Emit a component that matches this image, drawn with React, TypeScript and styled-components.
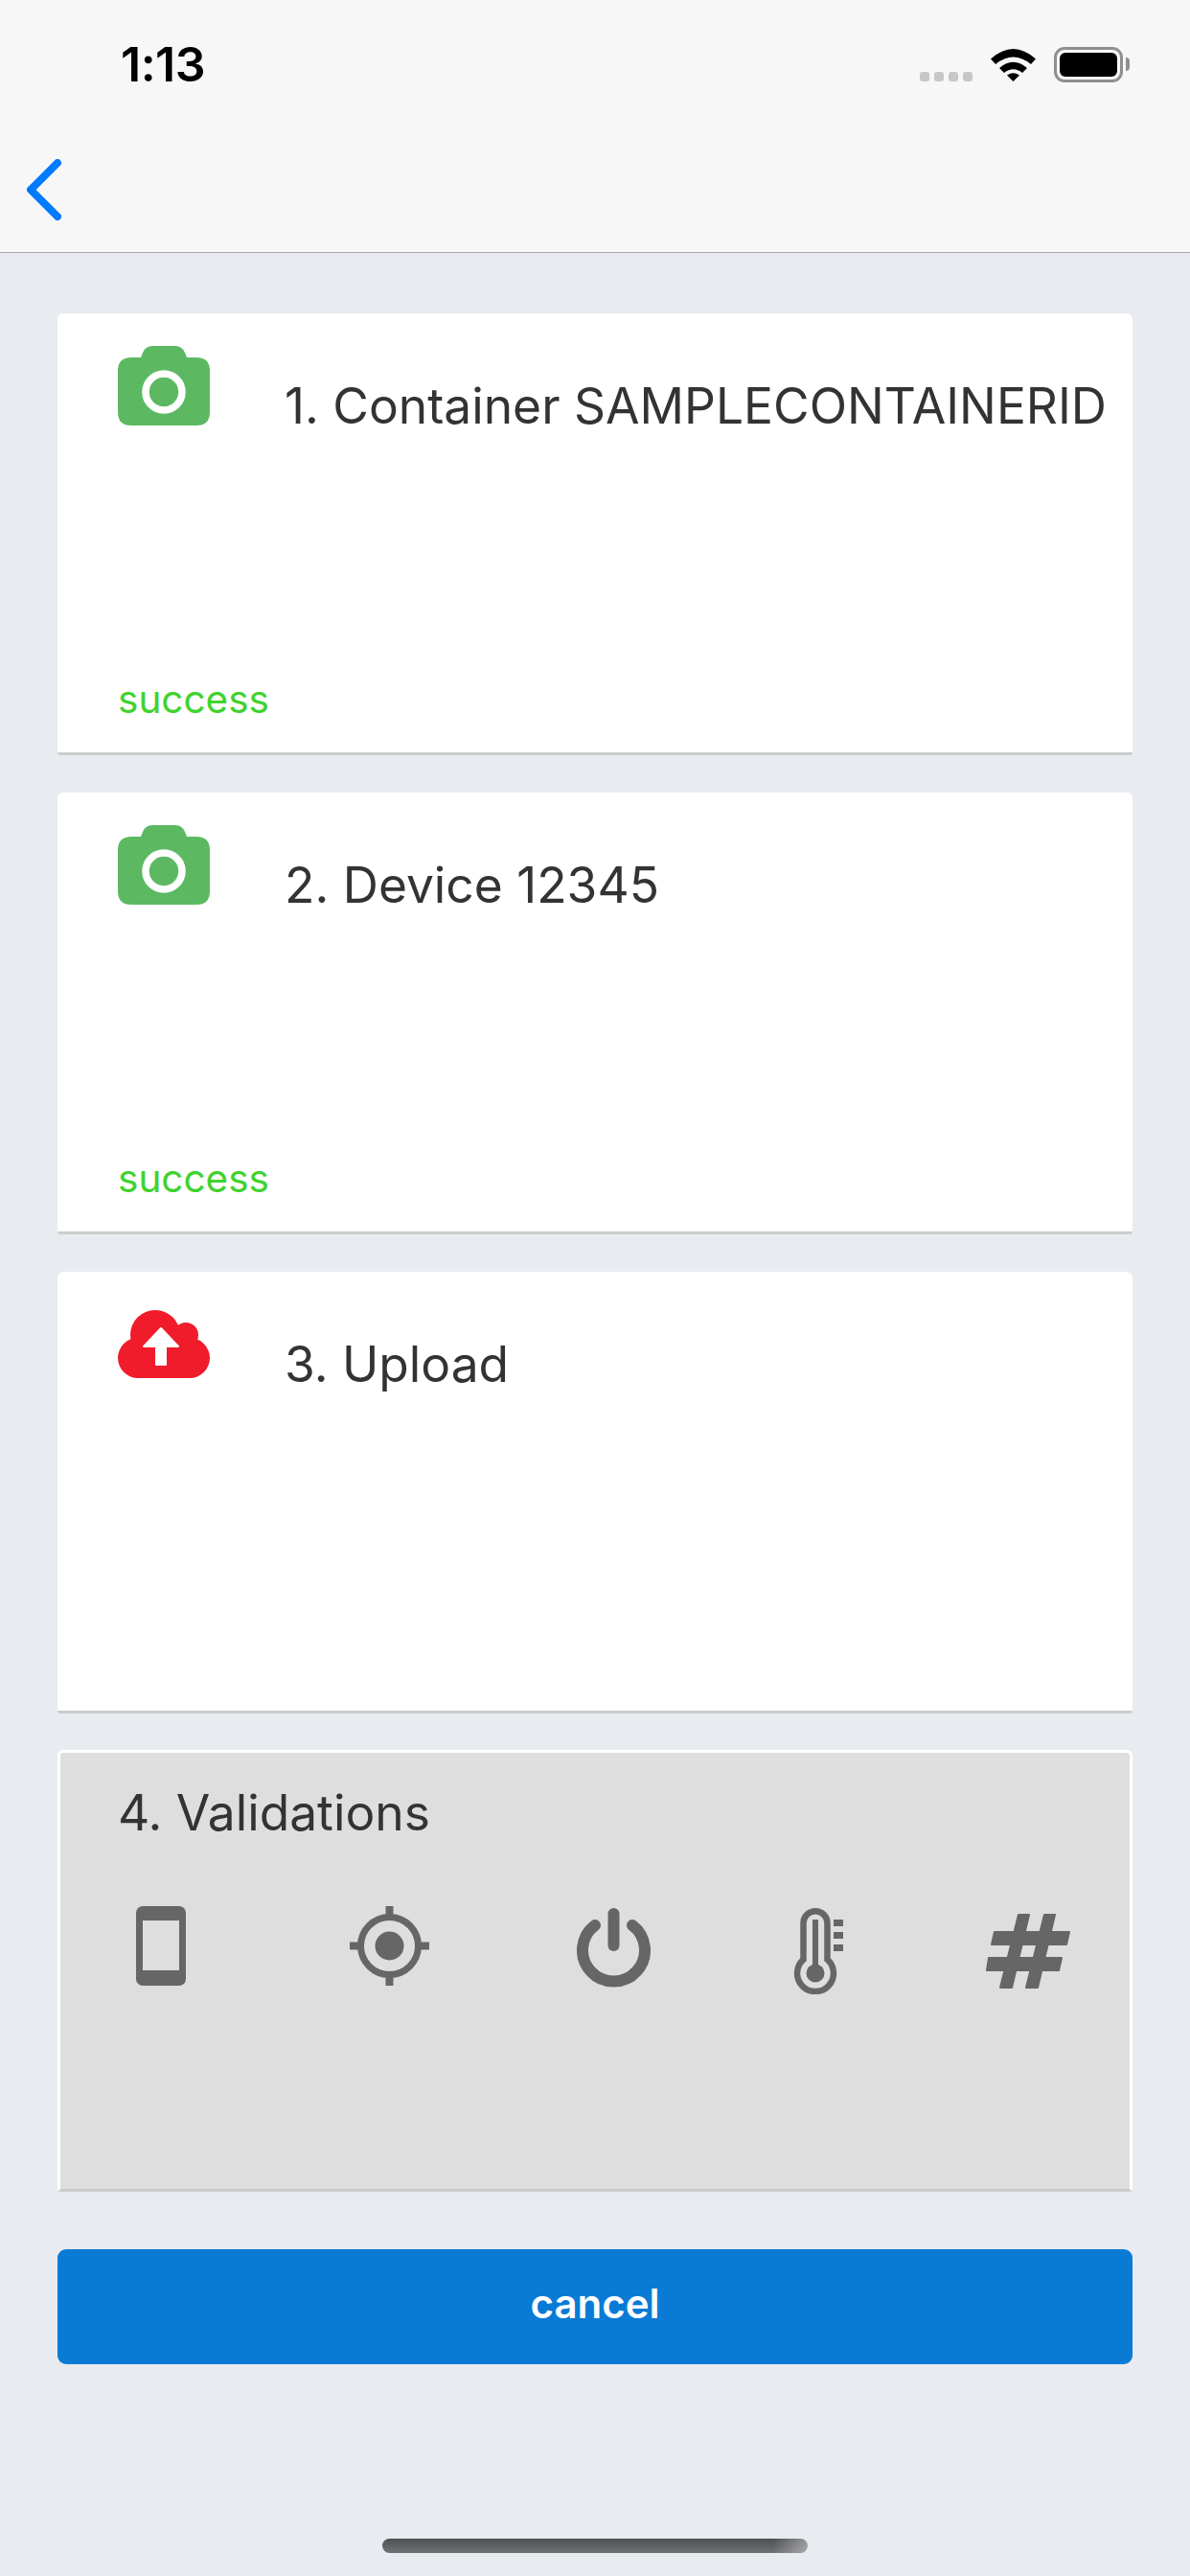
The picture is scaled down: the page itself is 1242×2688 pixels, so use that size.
import * as React from "react";
import styled, { createGlobalStyle } from "styled-components";

const GlobalStyle = createGlobalStyle`
  html, body {
    margin: 0;
    padding: 0;
    background: #e8ebf0;
    font-family: Inter, "Liberation Sans", sans-serif;
  }
  * { box-sizing: border-box; }
`;

const ICON_GREY = "#666666";
const PANEL_GREY = "#dedede";

const CameraIcon = () => (
  <svg width="96" height="83" viewBox="0 0 96 83">
    <path
      fill="#5cb962"
      d="M14 12H24L26 7Q29 0 36 0H60Q67 0 70 7L72 12H82Q96 12 96 26V69Q96 83 82 83H14Q0 83 0 69V26Q0 12 14 12Z"
    />
    <circle cx="48" cy="48" r="19" fill="none" stroke="#fff" strokeWidth="7.5" />
  </svg>
);

const CloudIcon = () => (
  <svg width="96" height="71" viewBox="0 0 96 71">
    <g fill="#f01c2c">
      <circle cx="39" cy="26" r="26" />
      <circle cx="71" cy="26" r="13" />
      <circle cx="21" cy="50" r="21" />
      <circle cx="75" cy="50" r="21" />
      <rect x="21" y="26" width="54" height="45" />
    </g>
    <path
      fill="#fff"
      stroke="#fff"
      strokeWidth="2"
      strokeLinejoin="round"
      d="M45 19L27 38H40V57H50V38H63Z"
    />
  </svg>
);

const PhoneIcon = () => (
  <svg width="52" height="83" viewBox="0 0 52 83">
    <rect width="52" height="83" rx="7" fill={ICON_GREY} />
    <rect x="7" y="15" width="38" height="52" fill={PANEL_GREY} />
  </svg>
);

const TargetIcon = () => (
  <svg width="83" height="83" viewBox="0 0 83 83">
    <g fill={ICON_GREY}>
      <circle cx="41.5" cy="41.5" r="15" />
      <rect x="37.5" y="0" width="8" height="12" />
      <rect x="37.5" y="71" width="8" height="12" />
      <rect x="0" y="37.5" width="12" height="8" />
      <rect x="71" y="37.5" width="12" height="8" />
    </g>
    <circle cx="41.5" cy="41.5" r="30" fill="none" stroke={ICON_GREY} strokeWidth="7" />
  </svg>
);

const PowerIcon = () => (
  <svg width="77" height="83" viewBox="0 0 77 83">
    <g fill="none" stroke={ICON_GREY} strokeWidth="12" strokeLinecap="round">
      <path d="M19 18A32.5 32.5 0 1 0 58 18" />
      <path d="M38.5 6V39" />
    </g>
  </svg>
);

const ThermometerIcon = () => (
  <svg width="53" height="90" viewBox="0 0 53 90">
    <path
      fill="none"
      stroke={ICON_GREY}
      strokeWidth="6.5"
      d="M10.5 53.7V15.75A12.5 12.5 0 0 1 35.5 15.75V53.7A19 19 0 1 1 10.5 53.7Z"
    />
    <g fill={ICON_GREY}>
      <rect x="20" y="12" width="6" height="50" />
      <circle cx="23" cy="68" r="9.5" />
      <rect x="42" y="12" width="10" height="7" />
      <rect x="42" y="25" width="10" height="7" />
      <rect x="42" y="38" width="10" height="7" />
    </g>
  </svg>
);

const HashIcon = () => (
  <svg width="88" height="78" viewBox="0 0 88 78">
    <g fill={ICON_GREY} stroke={ICON_GREY} strokeWidth="2" strokeLinejoin="round">
      <path d="M34 1H45L27 77H15Z" />
      <path d="M61 1H72L54 77H42Z" />
      <path d="M9 19H87L84 32H6Z" />
      <path d="M3 46H79L76 59H1Z" />
    </g>
  </svg>
);

const WifiIcon = () => (
  <svg width="47" height="36" viewBox="0 0 47 36">
    <g fill="#000">
      <path d="M0 12.5Q23.5 -8.5 47 12.5L42 18Q23.5 3 5 18Z" />
      <path d="M9 22Q23.5 9.5 38 22L33 27Q23.5 19.5 14 27Z" />
      <path d="M23.5 36L17 29.5Q23.5 25 30 29.5Z" />
    </g>
  </svg>
);

const Page = styled.div`
  width: 1242px;
  min-height: 2688px;
  display: flex;
  flex-direction: column;
  background: #e8ebf0;
  color: #333333;
`;

const Header = styled.header`
  height: 264px;
  background: #f7f7f7;
  border-bottom: 1px solid #a9a9ab;
`;

const StatusBar = styled.div`
  height: 132px;
  padding: 44px 70px 0 126px;
  display: flex;
  align-items: flex-start;
  justify-content: space-between;
`;

const Clock = styled.span`
  font-size: 50px;
  line-height: 47px;
  font-weight: 600;
  letter-spacing: -0.5px;
  color: #000;
`;

const StatusIcons = styled.div`
  display: flex;
  align-items: flex-start;
  margin-top: 5px;
`;

const SignalDots = styled.div`
  display: flex;
  gap: 5px;
  margin: 26px 19px 0 0;
`;

const SignalDot = styled.i`
  width: 10px;
  height: 10px;
  border-radius: 3px;
  background: #c7c7c7;
`;

const Battery = styled.div`
  position: relative;
  width: 72px;
  height: 37px;
  margin-left: 19px;
  padding: 3px;
  border: 3px solid #8f8f8f;
  border-radius: 11px;

  &::before {
    content: "";
    display: block;
    height: 100%;
    background: #000;
    border-radius: 6px;
  }

  &::after {
    content: "";
    position: absolute;
    top: 8px;
    right: -10px;
    width: 4px;
    height: 14px;
    background: #8f8f8f;
    border-radius: 0 6px 6px 0;
  }
`;

const NavBar = styled.nav`
  padding: 34px 0 0 28px;
`;

const Content = styled.main`
  display: flex;
  flex-direction: column;
  gap: 39px;
  padding: 63px 60px 0;
`;

const Card = styled.section<{ $disabled?: boolean }>`
  height: 461px;
  display: flex;
  flex-direction: column;
  border-radius: 6px 6px 3px 3px;
  border-bottom: 3px solid #cccccc;
  background: ${(p) => (p.$disabled ? PANEL_GREY : "#ffffff")};
  ${(p) =>
    p.$disabled &&
    "margin-top: -1px; border-top: 3px solid #fff; border-left: 3px solid #fff; border-right: 3px solid #fff;"}
`;

const CardHead = styled.div`
  display: flex;
  align-items: flex-start;
  padding: 34px 0 0 63px;
`;

const IconBox = styled.div<{ $drop?: number }>`
  width: 96px;
  height: 83px;
  margin-right: 78px;
  padding-top: ${(p) => p.$drop || 0}px;
`;

const Title = styled.h2`
  margin: 32px 0 0;
  font-size: 51.5px;
  line-height: 60px;
  font-weight: 400;
  white-space: nowrap;
`;

const Status = styled.div`
  margin: auto 0 31px 63px;
  font-size: 40.5px;
  line-height: 48px;
  color: #3fd32e;
`;

const ValidationTitle = styled(Title)`
  margin: 32px 0 0 60px;
`;

const ValidationRow = styled.div`
  display: grid;
  grid-template-columns: 210px 266px 202px 226px 212px;
  justify-items: center;
  align-items: flex-start;
  margin-top: 68px;
`;

const ValidationCell = styled.div<{ $drop?: number }>`
  padding-top: ${(p) => p.$drop || 0}px;
`;

const CancelButton = styled.button`
  height: 120px;
  margin-top: 21px;
  padding: 0 0 8px;
  border: 0;
  border-radius: 9px;
  background: #097bd5;
  color: #ffffff;
  font-family: inherit;
  font-size: 42px;
  font-weight: 600;
`;

const HomeBar = styled.div`
  width: 444px;
  height: 15px;
  margin: auto auto 24px;
  border-radius: 8px;
  background: linear-gradient(90deg, transparent 92%, rgba(232, 235, 240, 0.45)),
    linear-gradient(180deg, #4f5052, #707172);
`;

const steps = [
  { title: "1. Container SAMPLECONTAINERID", icon: <CameraIcon />, status: "success", drop: 0 },
  { title: "2. Device 12345", icon: <CameraIcon />, status: "success", drop: 0 },
  { title: "3. Upload", icon: <CloudIcon />, status: "", drop: 6 }
];

export default function App() {
  return (
    <Page>
      <GlobalStyle />
      <Header>
        <StatusBar>
          <Clock>1:13</Clock>
          <StatusIcons>
            <SignalDots>
              <SignalDot />
              <SignalDot />
              <SignalDot />
              <SignalDot />
            </SignalDots>
            <WifiIcon />
            <Battery />
          </StatusIcons>
        </StatusBar>
        <NavBar>
          <svg width="36" height="64" viewBox="0 0 36 64">
            <path
              d="M32 4L4 32L32 60"
              fill="none"
              stroke="#007aff"
              strokeWidth="8"
              strokeLinecap="round"
              strokeLinejoin="round"
            />
          </svg>
        </NavBar>
      </Header>
      <Content>
        {steps.map((step) => (
          <Card key={step.title}>
            <CardHead>
              <IconBox $drop={step.drop}>{step.icon}</IconBox>
              <Title>{step.title}</Title>
            </CardHead>
            {step.status && <Status>{step.status}</Status>}
          </Card>
        ))}
        <Card $disabled>
          <ValidationTitle>4. Validations</ValidationTitle>
          <ValidationRow>
            <ValidationCell>
              <PhoneIcon />
            </ValidationCell>
            <ValidationCell>
              <TargetIcon />
            </ValidationCell>
            <ValidationCell $drop={2}>
              <PowerIcon />
            </ValidationCell>
            <ValidationCell $drop={2}>
              <ThermometerIcon />
            </ValidationCell>
            <ValidationCell $drop={8}>
              <HashIcon />
            </ValidationCell>
          </ValidationRow>
        </Card>
        <CancelButton>cancel</CancelButton>
      </Content>
      <HomeBar />
    </Page>
  );
}
